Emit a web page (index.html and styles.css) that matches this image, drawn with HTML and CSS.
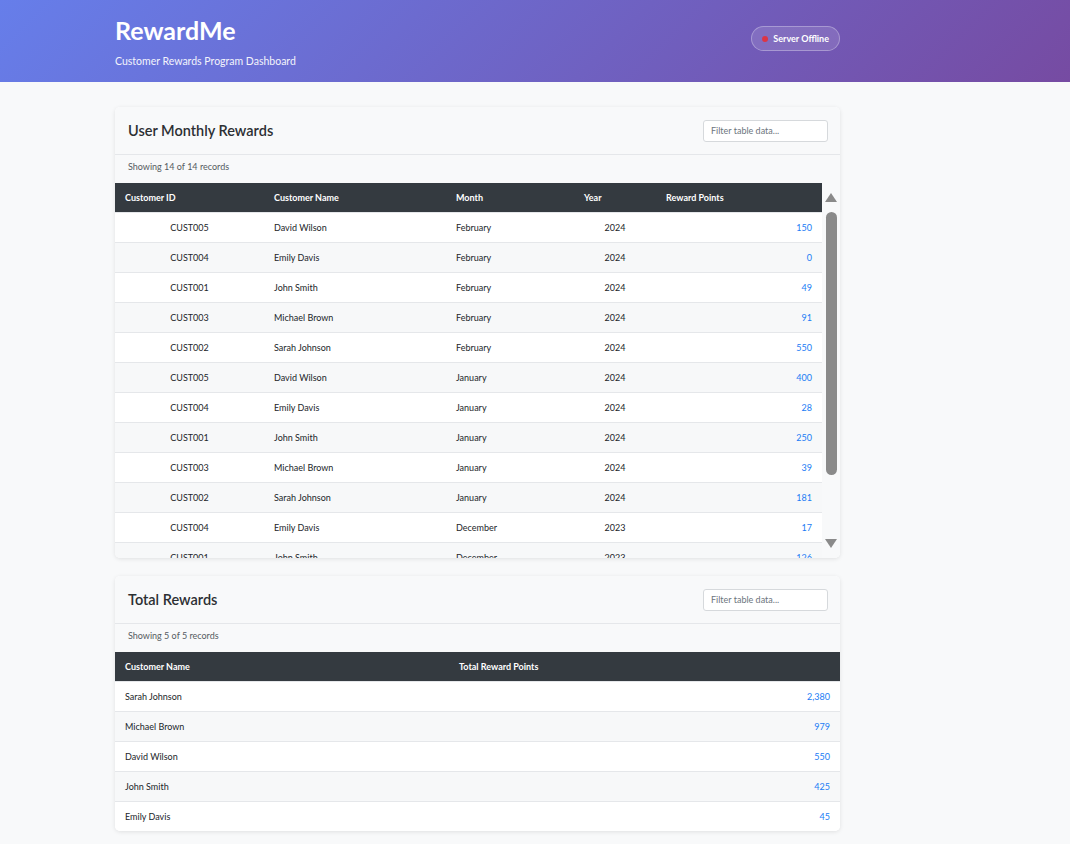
FILE: index.html
```html
<!DOCTYPE html>
<html lang="en">
<head>
<meta charset="utf-8">
<title>RewardMe</title>
<link rel="stylesheet" href="styles.css">
</head>
<body>
<header class="hero">
  <div class="hero-inner">
    <div class="brand">
      <h1 class="brand-title">RewardMe</h1>
      <p class="brand-sub">Customer Rewards Program Dashboard</p>
    </div>
    <div class="status"><span class="status-dot"></span>Server Offline</div>
  </div>
</header>
<main class="content">
  <section class="card">
    <div class="card-head">
      <h2 class="card-title">User Monthly Rewards</h2>
      <input class="filter" type="text" placeholder="Filter table data...">
    </div>
    <div class="card-meta">Showing 14 of 14 records</div>
    <div class="scroll-wrap">
      <div class="scroller">
        <table class="grid monthly">
          <thead>
            <tr><th class="c-id">Customer ID</th><th class="c-name">Customer Name</th><th class="c-month">Month</th><th class="c-year">Year</th><th class="c-pts">Reward Points</th></tr>
          </thead>
          <tbody>
            <tr><td class="center">CUST005</td><td>David Wilson</td><td>February</td><td class="center">2024</td><td class="pts">150</td></tr>
            <tr><td class="center">CUST004</td><td>Emily Davis</td><td>February</td><td class="center">2024</td><td class="pts">0</td></tr>
            <tr><td class="center">CUST001</td><td>John Smith</td><td>February</td><td class="center">2024</td><td class="pts">49</td></tr>
            <tr><td class="center">CUST003</td><td>Michael Brown</td><td>February</td><td class="center">2024</td><td class="pts">91</td></tr>
            <tr><td class="center">CUST002</td><td>Sarah Johnson</td><td>February</td><td class="center">2024</td><td class="pts">550</td></tr>
            <tr><td class="center">CUST005</td><td>David Wilson</td><td>January</td><td class="center">2024</td><td class="pts">400</td></tr>
            <tr><td class="center">CUST004</td><td>Emily Davis</td><td>January</td><td class="center">2024</td><td class="pts">28</td></tr>
            <tr><td class="center">CUST001</td><td>John Smith</td><td>January</td><td class="center">2024</td><td class="pts">250</td></tr>
            <tr><td class="center">CUST003</td><td>Michael Brown</td><td>January</td><td class="center">2024</td><td class="pts">39</td></tr>
            <tr><td class="center">CUST002</td><td>Sarah Johnson</td><td>January</td><td class="center">2024</td><td class="pts">181</td></tr>
            <tr><td class="center">CUST004</td><td>Emily Davis</td><td>December</td><td class="center">2023</td><td class="pts">17</td></tr>
            <tr><td class="center">CUST001</td><td>John Smith</td><td>December</td><td class="center">2023</td><td class="pts">126</td></tr>
            <tr><td class="center">CUST003</td><td>Michael Brown</td><td>December</td><td class="center">2023</td><td class="pts">89</td></tr>
            <tr><td class="center">CUST002</td><td>Sarah Johnson</td><td>December</td><td class="center">2023</td><td class="pts">300</td></tr>
          </tbody>
        </table>
      </div>
      <div class="vbar" aria-hidden="true">
        <span class="arrow-up"></span>
        <span class="thumb"></span>
        <span class="vbar-fill"></span>
        <span class="arrow-down"></span>
      </div>
    </div>
  </section>

  <section class="card">
    <div class="card-head">
      <h2 class="card-title">Total Rewards</h2>
      <input class="filter" type="text" placeholder="Filter table data...">
    </div>
    <div class="card-meta">Showing 5 of 5 records</div>
    <table class="grid totals">
      <thead>
        <tr><th class="t-name">Customer Name</th><th>Total Reward Points</th></tr>
      </thead>
      <tbody>
        <tr><td>Sarah Johnson</td><td class="pts">2,380</td></tr>
        <tr><td>Michael Brown</td><td class="pts">979</td></tr>
        <tr><td>David Wilson</td><td class="pts">550</td></tr>
        <tr><td>John Smith</td><td class="pts">425</td></tr>
        <tr><td>Emily Davis</td><td class="pts">45</td></tr>
      </tbody>
    </table>
  </section>
</main>
</body>
</html>
```

FILE: styles.css
```css
* { box-sizing: border-box; }

html, body {
  margin: 0;
  padding: 0;
}

body {
  background: #f8f9fa;
  font-family: "Lato", "Noto Sans", "Liberation Sans", sans-serif;
  color: #212529;
}

.hero {
  height: 82px;
  background: linear-gradient(135deg, #667eea 0%, #764ba2 100%);
  color: #fff;
}

.hero-inner {
  width: 725px;
  margin-left: 115px;
  display: flex;
  justify-content: space-between;
  align-items: flex-start;
}

.brand-title {
  margin: 14px 0 0 0;
  font-size: 25px;
  font-weight: 700;
  line-height: 32px;
}

.brand-sub {
  margin: 8px 0 0 0;
  font-size: 10.5px;
  line-height: 14px;
  opacity: 0.92;
}

.status {
  margin-top: 26px;
  height: 25px;
  padding: 0 10px 0 10px;
  border: 1px solid rgba(255, 255, 255, 0.3);
  background: rgba(255, 255, 255, 0.12);
  border-radius: 13px;
  display: flex;
  align-items: center;
  gap: 5px;
  font-size: 9px;
  font-weight: 700;
}

.status-dot {
  width: 6px;
  height: 6px;
  border-radius: 50%;
  background: #dc3545;
}

.content {
  width: 725px;
  margin: 25px 0 0 115px;
  display: flex;
  flex-direction: column;
  gap: 18px;
  padding-bottom: 13px;
}

.card {
  background: #fff;
  border-radius: 5px;
  box-shadow: 0 1px 4px rgba(0, 0, 0, 0.1);
  overflow: hidden;
}

.card-head {
  height: 48px;
  padding: 0 12px 0 13px;
  display: flex;
  justify-content: space-between;
  align-items: center;
  background: #f8f9fa;
  border-bottom: 1px solid #e5e7ea;
}

.card-title {
  margin: 0;
  font-size: 14.5px;
  font-weight: 600;
  color: #2c2f33;
}

.filter {
  width: 125px;
  height: 22px;
  border: 1px solid #d6d9dc;
  border-radius: 3px;
  padding: 0 7px;
  font-family: inherit;
  font-size: 9px;
  color: #495057;
  background: #fff;
}

.filter::placeholder { color: #6c757d; }

.card-meta {
  height: 28px;
  padding: 6px 13px 0 13px;
  line-height: 12px;
  font-size: 9px;
  color: #555b61;
  background: #f8f9fa;
}

.scroll-wrap {
  display: flex;
  height: 375px;
}

.scroller {
  flex: 1;
  min-width: 0;
  overflow-y: auto;
  scrollbar-width: none;
}

.scroller::-webkit-scrollbar { display: none; }

.vbar {
  width: 18px;
  flex: none;
  background: #f8f9fa;
  display: flex;
  flex-direction: column;
  align-items: center;
  padding: 10px 0 10px 0;
}

.arrow-up {
  width: 0;
  height: 0;
  border-left: 6px solid transparent;
  border-right: 6px solid transparent;
  border-bottom: 9px solid #8a8a8a;
}

.arrow-down {
  width: 0;
  height: 0;
  border-left: 6px solid transparent;
  border-right: 6px solid transparent;
  border-top: 9px solid #8a8a8a;
}

.thumb {
  margin-top: 10px;
  width: 11px;
  height: 263px;
  border-radius: 6px;
  background: #8a8a8a;
}

.vbar-fill { flex: 1; }

.grid {
  width: 100%;
  border-collapse: collapse;
  font-size: 9px;
  background: #fff;
}

.grid th {
  position: sticky;
  top: 0;
  height: 29px;
  background: #343a40;
  color: #fff;
  font-weight: 700;
  text-align: left;
  padding: 0 10px;
}

.grid td {
  height: 30px;
  padding: 0 10px;
  color: #212529;
  border-top: 1px solid #e5e7ea;
}

.grid tbody tr:nth-child(even) td { background: #f7f8f9; }

.grid td.center { text-align: center; }

.grid td.pts {
  text-align: right;
  color: #1a7cf5;
}

.monthly .c-id { width: 149px; }
.monthly .c-name { width: 182px; }
.monthly .c-month { width: 128px; }
.monthly .c-year { width: 82px; }

.totals .t-name { width: 334px; }
```
